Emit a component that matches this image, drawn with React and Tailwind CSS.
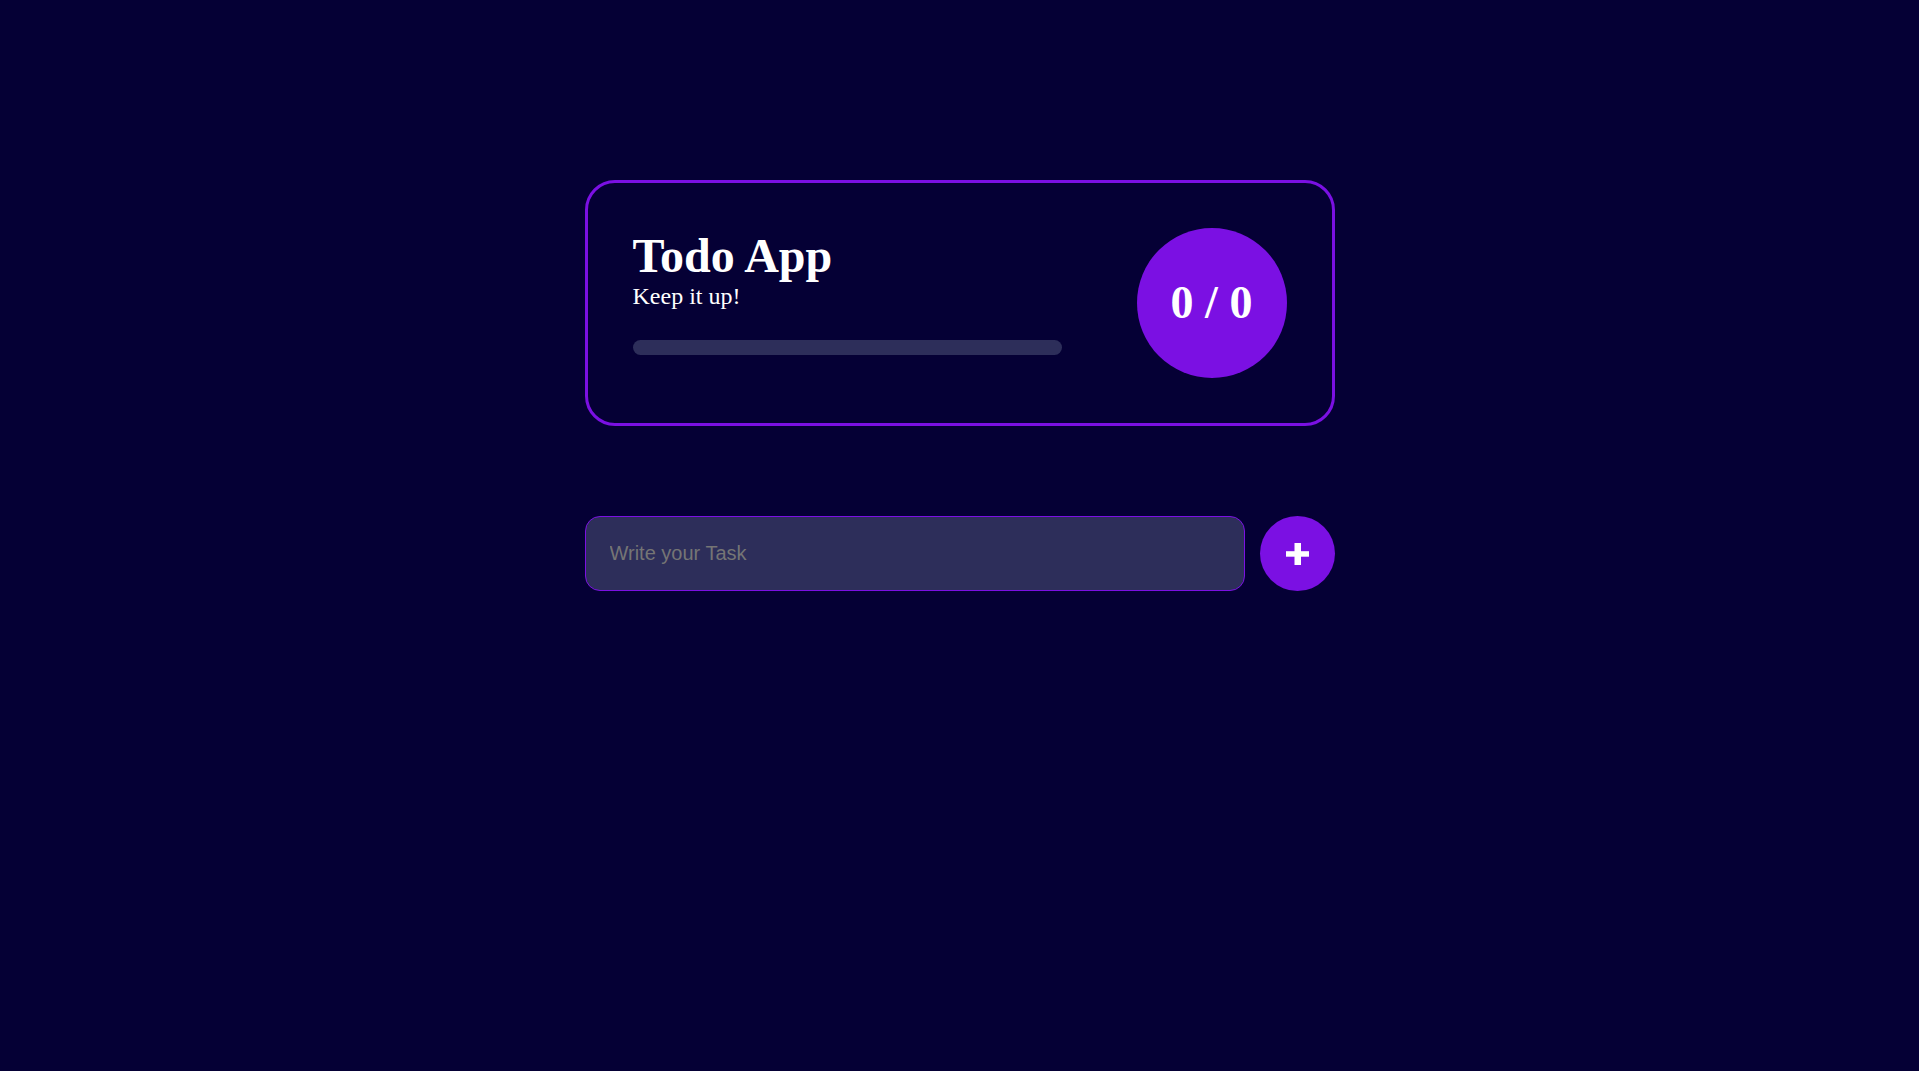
import React from "react";

export default function App() {
  return (
    <div className="min-h-[1071px] w-full bg-[#050035]" style={{ fontFamily: '"Liberation Serif", "Times New Roman", serif' }}>
      <div className="mx-auto w-[750px] pt-[180px]">
        <div className="flex items-center justify-between rounded-[30px] border-[3px] border-[#7b10e3] p-[45px]">
          <div className="self-start pt-[4px]">
            <h1 className="m-0 text-[48px] font-bold leading-none text-white">Todo App</h1>
            <p className="text-[24px] leading-[32px] text-white">Keep it up!</p>
            <div className="mt-[28px] h-[15px] w-[429px] rounded-full bg-[#2d2e5a]"></div>
          </div>
          <div className="flex h-[150px] w-[150px] items-center justify-center rounded-full bg-[#7b10e3]">
            <span className="text-[46px] font-bold leading-none text-white">0 / 0</span>
          </div>
        </div>
        <div className="mt-[90px] flex items-center gap-[15px]">
          <input
            autoFocus
            type="text"
            placeholder="Write your Task"
            className="h-[75px] flex-1 rounded-[15px] border border-[#7b10e3] bg-[#2d2e5a] pl-6 text-[20px] text-white caret-white outline-none placeholder:text-[#757575]"
            style={{ fontFamily: '"Liberation Sans", Arial, sans-serif' }}
          />
          <button className="flex h-[75px] w-[75px] shrink-0 items-center justify-center rounded-full bg-[#7b10e3]">
            <svg width="23" height="22" viewBox="0 0 23 22">
              <rect x="0" y="8.2" width="23" height="5.5" fill="white" />
              <rect x="8.5" y="0" width="6.5" height="22" fill="white" />
            </svg>
          </button>
        </div>
      </div>
    </div>
  );
}
